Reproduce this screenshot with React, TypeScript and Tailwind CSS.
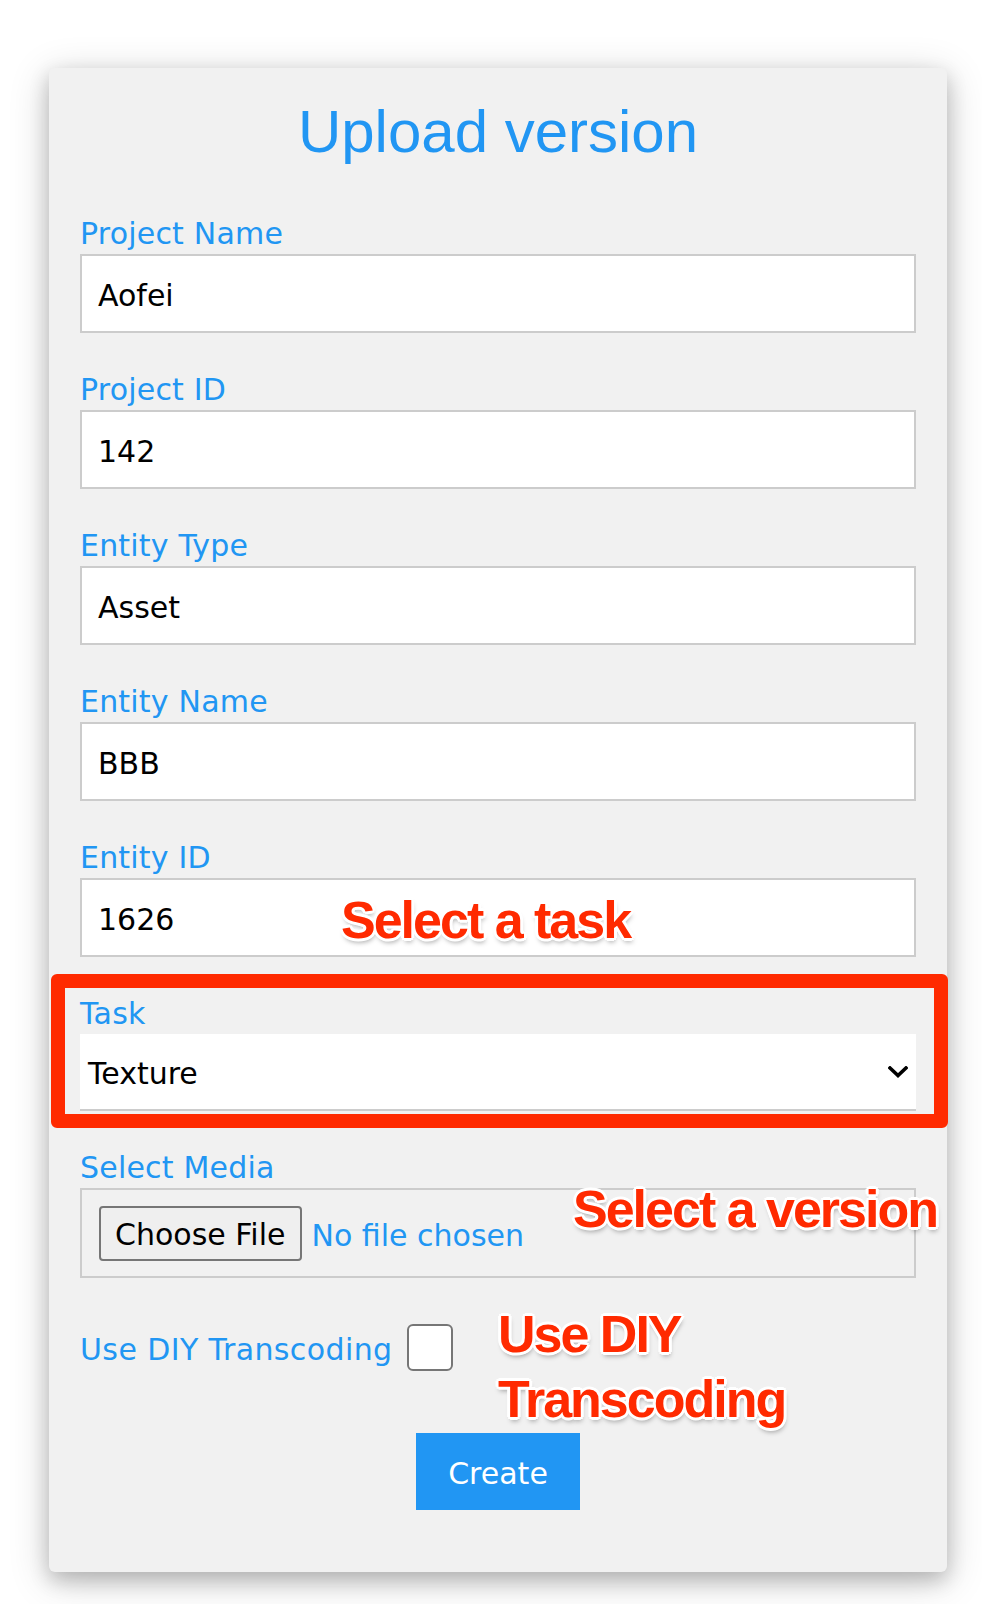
import React from 'react';

const fields = [
  { label: 'Project Name', value: 'Aofei' },
  { label: 'Project ID', value: '142' },
  { label: 'Entity Type', value: 'Asset' },
  { label: 'Entity Name', value: 'BBB' },
  { label: 'Entity ID', value: '1626' },
];

const note =
  "absolute font-['Liberation_Sans',Arial,sans-serif] font-bold text-[52px] tracking-[-2px] text-[#ff2a00] whitespace-nowrap [text-shadow:-2px_-2px_0_#fff,2px_-2px_0_#fff,-2px_2px_0_#fff,2px_2px_0_#fff,0_-3px_0_#fff,0_3px_0_#fff,-3px_0_0_#fff,3px_0_0_#fff,1px_4px_5px_rgba(0,0,0,0.35)]";

export default function App() {
  return (
    <div className="relative w-[982px] min-h-[1604px] bg-white pt-[68px] font-['DejaVu_Sans',Verdana,sans-serif]">
      <div className="ml-[49px] w-[898px] bg-[#f1f1f1] rounded-[6px] pt-[34px] pb-[62px] px-[31px] shadow-[0_8px_20px_0_rgba(0,0,0,0.2),0_8px_40px_0_rgba(0,0,0,0.19)]">
        <h2 className="text-center text-[60px] leading-none text-[#2196F3] font-['Liberation_Sans',Arial,sans-serif]">
          Upload version
        </h2>

        <form className="mt-[54px]" onSubmit={(e) => e.preventDefault()}>
          {fields.map((f) => (
            <div key={f.label} className="mb-[39px]">
              <label className="block text-[30px] leading-[36px] tracking-[0.2px] text-[#2196F3]">{f.label}</label>
              <div className="mt-[2px] h-[79px] bg-white border-2 border-[#cccccc] pl-4 pt-[4px] flex items-center text-[30px] text-black">
                {f.value}
              </div>
            </div>
          ))}

          <div className="mb-[39px]">
            <label className="block text-[30px] leading-[36px] tracking-[0.2px] text-[#2196F3]">Task</label>
            <div className="mt-[2px] h-[77px] bg-white border-b-2 border-[#cccccc] pl-2 pr-2 flex items-center justify-between text-[30px] text-black">
              <span className="pt-[4px]">Texture</span>
              <svg width="20" height="12" viewBox="0 0 20 12" fill="none">
                <path d="M2 2 L10 9.5 L18 2" stroke="#000" strokeWidth="3.6" strokeLinecap="square" />
              </svg>
            </div>
          </div>

          <div>
            <label className="block text-[30px] leading-[36px] tracking-[0.2px] text-[#2196F3]">Select Media</label>
            <div className="mt-[2px] h-[90px] border-2 border-[#cccccc] pl-[17px] flex items-center gap-[10px] text-[30px]">
              <button
                type="button"
                className="h-[55px] px-[14px] pt-[4px] bg-[#efefef] border-2 border-[#767676] rounded-[4px] text-black leading-none"
              >
                Choose File
              </button>
              <span className="pt-[4px] text-[#2196F3]">No file chosen</span>
            </div>
          </div>

          <div className="mt-[46px] flex items-center gap-[14px]">
            <span className="pt-[4px] text-[30px] leading-[36px] tracking-[0.4px] text-[#2196F3]">Use DIY Transcoding</span>
            <div className="w-[46px] h-[47px] bg-white border-2 border-[#767676] rounded-[6px]" />
          </div>

          <div className="mt-[62px] flex justify-center">
            <button
              type="submit"
              className="w-[164px] h-[77px] pt-[4px] bg-[#2196F3] text-white text-[30px] leading-none"
            >
              Create
            </button>
          </div>
        </form>
      </div>

      <div className="absolute left-[51px] top-[974px] w-[897px] h-[154px] border-[14px] border-[#ff2a00] rounded-[6px]" />

      <div className={`${note} leading-none left-[341px] top-[894px]`}>Select a task</div>
      <div className={`${note} leading-none left-[573px] top-[1183px]`}>Select a version</div>
      <div className={`${note} leading-[65px] left-[498px] top-[1302px]`}>
        Use DIY
        <br />
        Transcoding
      </div>
    </div>
  );
}
